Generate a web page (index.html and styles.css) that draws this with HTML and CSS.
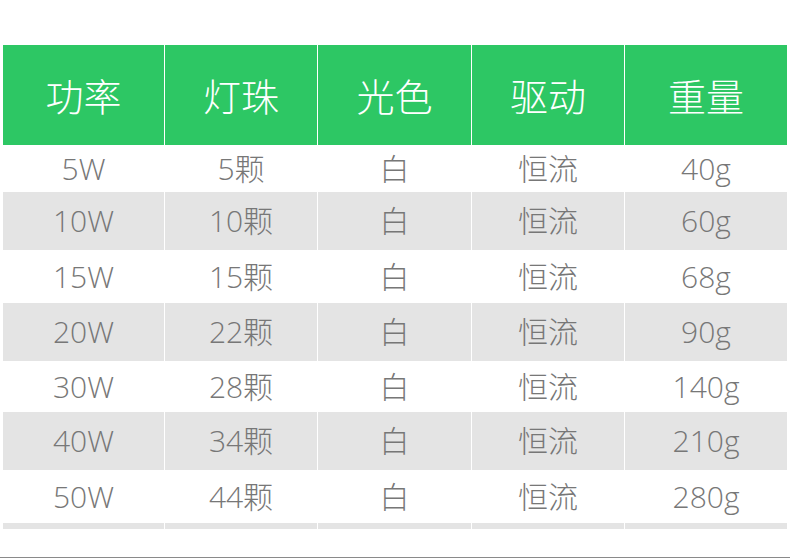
FILE: index.html
```html
<!DOCTYPE html>
<html lang="zh-CN">
<head>
<meta charset="utf-8">
<title>参数表</title>
<link rel="stylesheet" href="styles.css">
</head>
<body>
<div class="sheet">
  <div class="row head">
    <div class="cell">功率</div>
    <div class="cell">灯珠</div>
    <div class="cell">光色</div>
    <div class="cell">驱动</div>
    <div class="cell">重量</div>
  </div>
  <div class="row r1">
    <div class="cell">5W</div><div class="cell">5颗</div><div class="cell">白</div><div class="cell">恒流</div><div class="cell">40g</div>
  </div>
  <div class="row alt">
    <div class="cell">10W</div><div class="cell">10颗</div><div class="cell">白</div><div class="cell">恒流</div><div class="cell">60g</div>
  </div>
  <div class="row r3">
    <div class="cell">15W</div><div class="cell">15颗</div><div class="cell">白</div><div class="cell">恒流</div><div class="cell">68g</div>
  </div>
  <div class="row alt">
    <div class="cell">20W</div><div class="cell">22颗</div><div class="cell">白</div><div class="cell">恒流</div><div class="cell">90g</div>
  </div>
  <div class="row r5">
    <div class="cell">30W</div><div class="cell">28颗</div><div class="cell">白</div><div class="cell">恒流</div><div class="cell">140g</div>
  </div>
  <div class="row alt">
    <div class="cell">40W</div><div class="cell">34颗</div><div class="cell">白</div><div class="cell">恒流</div><div class="cell">210g</div>
  </div>
  <div class="row r3">
    <div class="cell">50W</div><div class="cell">44颗</div><div class="cell">白</div><div class="cell">恒流</div><div class="cell">280g</div>
  </div>
  <div class="row strip">
    <div class="cell"></div><div class="cell"></div><div class="cell"></div><div class="cell"></div><div class="cell"></div>
  </div>
</div>
<div class="rule"></div>
</body>
</html>
```
FILE: styles.css
```css
html, body {
  margin: 0;
  padding: 0;
  background: #ffffff;
}
body {
  width: 790px;
  height: 558px;
  overflow: hidden;
  font-family: "Open Sans", "Noto Sans CJK SC", sans-serif;
  font-weight: 300;
}
.sheet {
  padding: 45px 3px 0 3px;
  height: 512px;
}
.row {
  display: grid;
  grid-template-columns: 161px 152px 153px 152px 162px;
  column-gap: 1px;
  background: #ffffff;
}
.cell {
  display: flex;
  align-items: center;
  justify-content: center;
  color: #777777;
  font-size: 30px;
  line-height: 1;
}
.head { height: 100px; }
.head .cell {
  background: #2dc764;
  color: #ffffff;
  font-family: "Noto Sans CJK SC", sans-serif;
  font-size: 38px;
}
.r1 { height: 47px; }
.r3 { height: 53px; }
.r5 { height: 51px; }
.alt { height: 58px; }
.alt .cell { background: #e4e4e4; }
.strip { height: 6px; }
.strip .cell { background: #e4e4e4; }
.rule {
  height: 1px;
  background: #8a8a8a;
}
```
